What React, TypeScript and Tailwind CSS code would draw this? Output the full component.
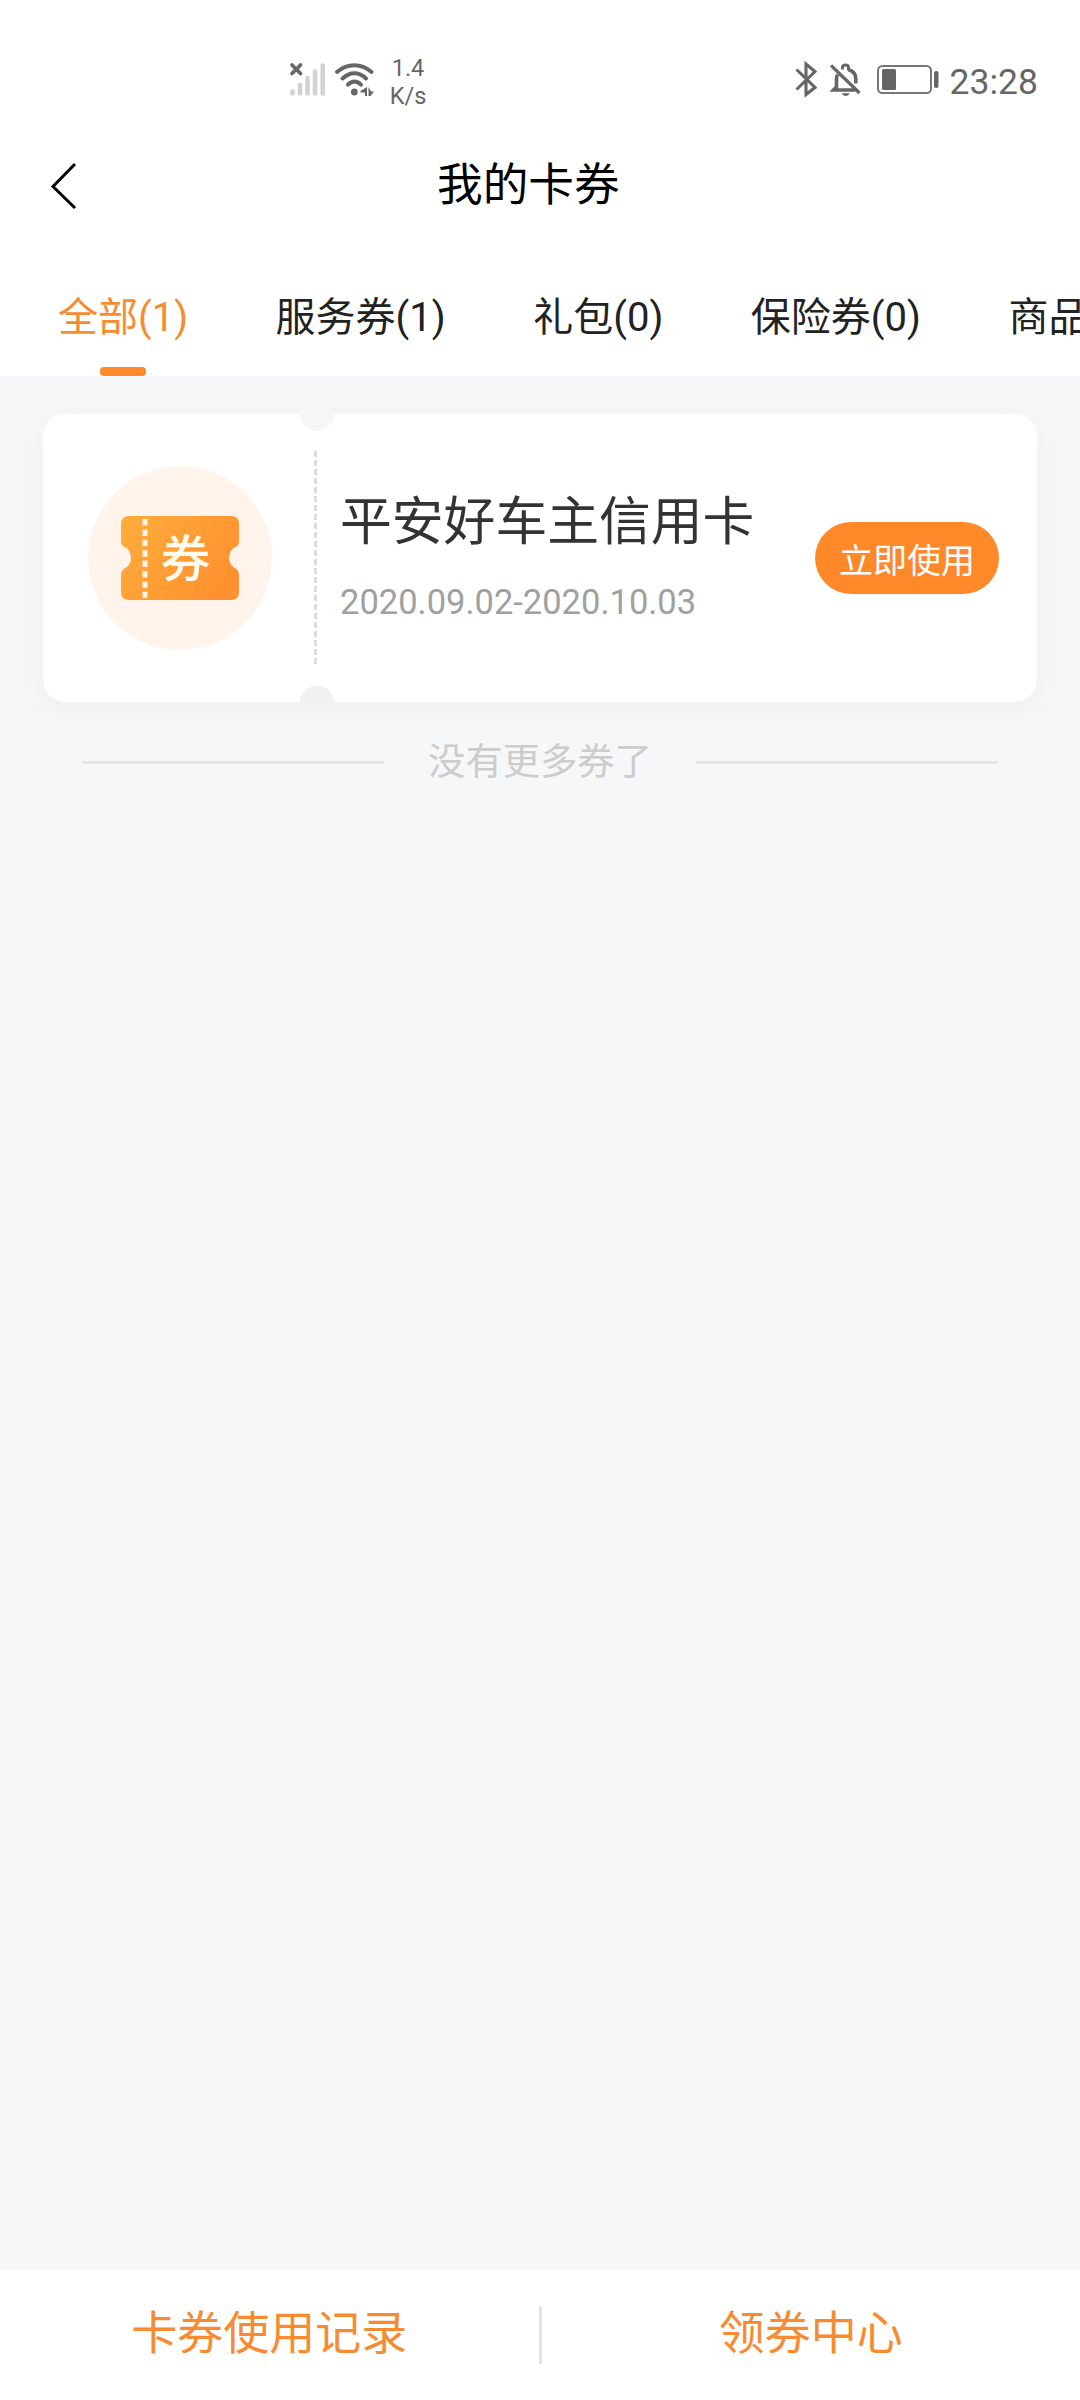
import React from "react";

const tabs = ["全部(1)", "服务券(1)", "礼包(0)", "保险券(0)", "商品券(0)"];

const StatusBar = () => {
  return (
    <div className="flex h-[130px] w-full items-start justify-between text-[#666666] font-['Roboto',sans-serif]">
      <div className="flex pl-[288px] pt-[60px]">
        <svg width="38" height="38" viewBox="0 0 38 38" fill="none">
          <g stroke="#d2d2d2" strokeWidth="4.6" strokeLinecap="round">
            <path d="M4.5 31.5v2M12 25v8.500M19.500 18v15.500M27 11.500v22M34.700 5.500v28" />
          </g>
          <path
            d="M4 5l8.500 8.500M12.500 5l-8.500 8.500"
            stroke="#666"
            strokeWidth="3.700"
            strokeLinecap="round"
          />
        </svg>
        <svg width="44" height="38" viewBox="0 0 44 38" fill="none" className="ml-2">
          <g stroke="#666" strokeWidth="4" strokeLinecap="round">
            <path d="M3 12C13.500 3 27 3 37.500 12" />
            <path d="M8.500 18.500C16 11.500 25 11.500 32 18.500" />
            <path d="M14 24.700C18 20.500 23 20.500 27 24.700" />
          </g>
          <circle cx="20.300" cy="32" r="3.400" fill="#666" />
          <path d="M33 27v9h-2v-3.500h-4.500v-1.500zM34.500 27v9h2l3.500-4.500h-3z" fill="#666" />
        </svg>
        <div className="-mt-[6px] ml-[11px] flex w-[38px] flex-col items-center text-[23.5px] leading-[28px]">
          <span>1.4</span>
          <span>K/s</span>
        </div>
      </div>
      <div className="flex pr-[42px] pt-[60px]">
        <svg width="22" height="38" viewBox="0 0 22 38" fill="none">
          <path
            d="M1.500 9.500l18.500 18-9 7V4l9 7.500-18.500 18"
            stroke="#666"
            strokeWidth="3.100"
          />
        </svg>
        <svg width="34" height="38" viewBox="0 0 34 38" fill="none" className="ml-[13px]">
          <g stroke="#666" strokeWidth="3.600">
            <path d="M1 5.500L29.500 33" strokeWidth="3.300" />
            <path d="M7.500 14.500c-1 2-1 3.500-1 5.500v7l-3 3H25" />
            <path d="M18.500 9.800c4.500 1.200 7.300 4.700 7.300 9.200v4.500" />
            <path d="M12.500 9.500V7.500c0-3.500 6-3.500 6 0v3" strokeWidth="3" />
          </g>
          <path d="M12 33.300h7.500c-1 3.500-6.500 3.500-7.500 0z" fill="#666" />
        </svg>
        <svg width="62" height="38" viewBox="0 0 62 38" fill="none" className="ml-[13px]">
          <rect x="1" y="6" width="53" height="27" rx="4.500" stroke="#777" strokeWidth="2" />
          <rect x="5" y="9" width="14" height="21" rx="1.500" fill="#666" />
          <rect x="57" y="11" width="4.500" height="17" rx="2" fill="#666" />
        </svg>
        <span className="ml-[11px] text-[35.5px] leading-[44px]">23:28</span>
      </div>
    </div>
  );
};

const TicketIcon = () => {
  return (
    <svg width="118" height="84" viewBox="0 0 118 84">
      <defs>
        <linearGradient id="ticket" x1="0" y1="0" x2="1" y2="0.500">
          <stop offset="0" stopColor="#ffad3d" />
          <stop offset="1" stopColor="#ff922f" />
        </linearGradient>
      </defs>
      <path
        d="M8 0H110Q118 0 118 8V25Q118 29 114.500 31Q108 34 108 42Q108 49 114.500 52.500Q118 55 118 59V76Q118 84 110 84H8Q0 84 0 76V59Q0 55 3.500 52.500Q10 49 10 42Q10 34 3.500 31Q0 29 0 25V8Q0 0 8 0Z"
        fill="url(#ticket)"
      />
      <path
        d="M24 3V82"
        stroke="#fff4e6"
        strokeWidth="5"
        strokeDasharray="6.500 3.900"
      />
      <text
        x="64.5"
        y="61"
        textAnchor="middle"
        fill="#fffbf0"
        fontSize="50"
        fontWeight="500"
        fontFamily="Noto Sans CJK SC, sans-serif"
      >
        券
      </text>
    </svg>
  );
};

const CouponCard = () => {
  return (
    <div className="relative mx-[43px] mt-[38px] flex h-[288px] items-center rounded-[22px] bg-white shadow-[0_8px_26px_rgba(90,100,90,0.06)]">
      <div className="absolute left-[257px] top-0 h-[17px] w-[34px] rounded-b-full bg-[#f5f6f8]" />
      <div className="absolute bottom-0 left-[257px] h-[16px] w-[34px] rounded-t-full bg-[#f0f2f2]" />
      <div className="ml-[45px] flex size-[184px] items-center justify-center rounded-full bg-[#fff4ec]">
        <TicketIcon />
      </div>
      <svg width="3" height="214" className="ml-[42px]">
        <path d="M1.500 0V214" stroke="#dcdcdc" strokeWidth="3" strokeDasharray="6 3" />
      </svg>
      <div className="ml-[23px] flex flex-col">
        <h2 className="-mt-[6px] text-[51.8px] leading-[60px] text-[#333333]">平安好车主信用卡</h2>
        <p className="mt-[33px] font-['Roboto',sans-serif] text-[34.5px] leading-[42px] text-[#a0a0a0]">
          2020.09.02-2020.10.03
        </p>
      </div>
      <button className="ml-auto mr-[38px] h-[72px] w-[184px] rounded-full bg-[#ff8829] pt-px text-[34px] leading-[72px] text-white">
        立即使用
      </button>
    </div>
  );
};

const App = () => {
  return (
    <div className="flex h-[2400px] w-[1080px] flex-col overflow-hidden bg-[#f6f7f9] font-['Noto_Sans_CJK_SC',sans-serif]">
      <header className="h-[376px] bg-white">
        <StatusBar />
        <div className="flex h-[110px] items-center">
          <svg width="28" height="48" viewBox="0 0 28 48" fill="none" className="ml-[50px] mt-[2px]">
            <path d="M25 2L3 24.500L25 46" stroke="#000" strokeWidth="3" />
          </svg>
          <h1 className="-mt-[8px] ml-[359px] text-[45.7px] leading-[60px] text-black">我的卡券</h1>
        </div>
        <nav className="flex gap-[87.5px] whitespace-nowrap pl-[58px] text-[40px] text-[#222222]">
          {tabs.map((tab, i) => (
            <div
              key={tab}
              className={
                i === 0
                  ? "flex h-[136px] flex-col items-center text-[#f78b31]"
                  : "flex h-[136px] flex-col items-center"
              }
            >
              <span className="mt-[48px] font-['Roboto','Noto_Sans_CJK_SC',sans-serif] leading-[60px]">{tab}</span>
              {i === 0 && (
                <div className="mt-[19px] h-[9px] w-[46px] rounded-[4px] bg-[#ff8a2b]" />
              )}
            </div>
          ))}
        </nav>
      </header>

      <main className="flex-1">
        <CouponCard />
        <div className="mx-[82px] mt-[34px] flex items-center">
          <div className="h-[3px] flex-1 bg-[#e4e5e7]" />
          <span className="-mt-[7px] mx-[44px] text-[37.3px] leading-[60px] text-[#cccccc]">没有更多券了</span>
          <div className="h-[3px] flex-1 bg-[#e4e5e7]" />
        </div>
      </main>

      <footer className="flex h-[130px] items-center bg-white text-[46px] leading-[60px] text-[#f78b31]">
        <a className="-mt-[13px] flex-1 text-center">卡券使用记录</a>
        <div className="h-[58px] w-[3px] bg-[#e2e2e2]" />
        <a className="-mt-[13px] flex-1 text-center">领券中心</a>
      </footer>
    </div>
  );
};

export default App;
